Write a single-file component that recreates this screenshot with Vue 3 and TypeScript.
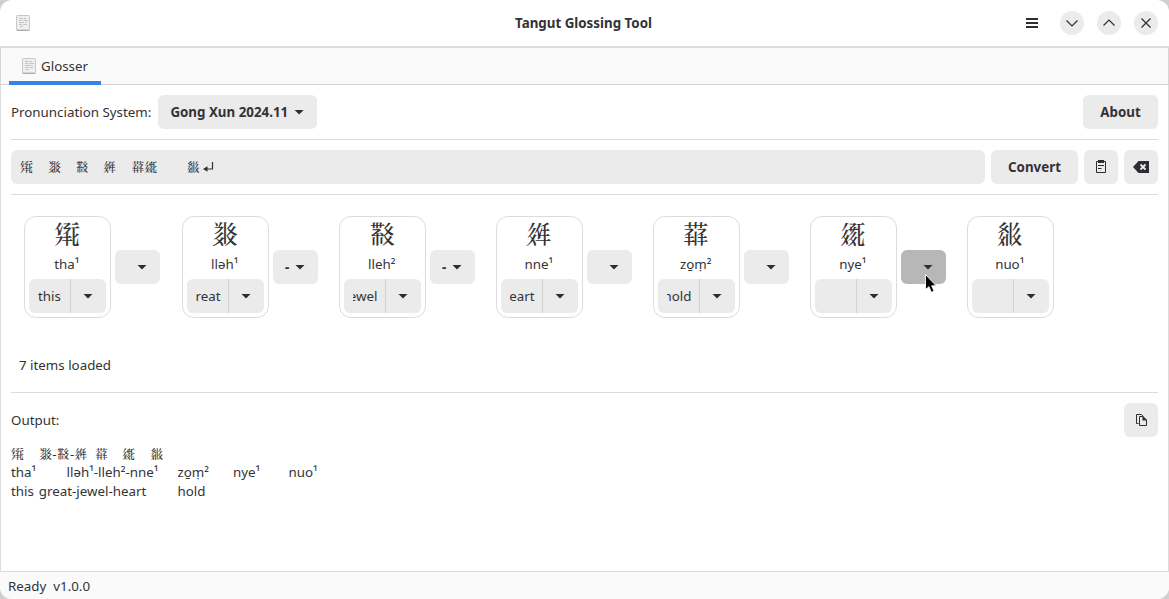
<script setup lang="ts">
interface Cell {
  glyph: string
  sound: string
  gloss: string
  joiner: string | null
  hovered?: boolean
}

const cells: Cell[] = [
  { glyph: '𗋕', sound: 'tha¹', gloss: 'this', joiner: '' },
  { glyph: '𘏨', sound: 'lləh¹', gloss: 'great', joiner: '-' },
  { glyph: '𘜶', sound: 'lleh²', gloss: 'jewel', joiner: '-' },
  { glyph: '𗤶', sound: 'nne¹', gloss: 'heart', joiner: '' },
  { glyph: '\u{17708}', sound: 'zo̱ṃ²', gloss: 'hold', joiner: '' },
  { glyph: '\u{17a7a}', sound: 'nye¹', gloss: '', joiner: '', hovered: true },
  { glyph: '\u{1853c}', sound: 'nuo¹', gloss: '', joiner: null },
]

interface Segment {
  text: string
  width: number
}

const g = cells.map((c) => c.glyph)

const inputSegments: Segment[] = [
  { text: g[0], width: 28 },
  { text: g[1], width: 27.5 },
  { text: g[2], width: 27.5 },
  { text: g[3], width: 28 },
  { text: g[4] + g[5], width: 55.5 },
  { text: g[6], width: 16.5 },
]

const outputRows: { kind: string; segments: Segment[] }[] = [
  {
    kind: 'script',
    segments: [
      { text: g[0], width: 28 },
      { text: `${g[1]}-${g[2]}-${g[3]}`, width: 55.5 },
      { text: g[4], width: 27.5 },
      { text: g[5], width: 28 },
      { text: g[6], width: 28 },
    ],
  },
  {
    kind: 'sounds',
    segments: [
      { text: 'tha¹', width: 55.5 },
      { text: 'lləh¹-lleh²-nne¹', width: 111 },
      { text: 'zo̱ṃ²', width: 55.5 },
      { text: 'nye¹', width: 55.5 },
      { text: 'nuo¹', width: 55.5 },
    ],
  },
  {
    kind: 'glosses',
    segments: [
      { text: 'this', width: 27.75 },
      { text: 'great-jewel-heart', width: 138.75 },
      { text: 'hold', width: 55.5 },
    ],
  },
]
</script>

<template>
  <div class="desktop">
    <div class="window">
      <header class="titlebar">
        <svg class="app-icon" width="16" height="18" viewBox="0 0 16 18">
          <rect x="1.5" y="1.5" width="13" height="14.5" rx="0.8" fill="#efefef" stroke="#c8c8c8" />
          <path d="M1.5 16.4h13" stroke="#a6a6a6" />
          <path d="M4 4.500h4M9 4.500h2M4 6.500h3M8 6.500h5M4 8.500h5M10 8.500h1.500M4 10.500h3M8 10.500h4M5 12.500h3" stroke="#c4c4c4" />
        </svg>
        <h1>Tangut Glossing Tool</h1>
        <div class="controls">
          <svg class="burger" width="12" height="10" viewBox="0 0 12 10"><path d="M0 1h12M0 5h12M0 9h12" stroke="#2e2e32" stroke-width="2" /></svg>
          <span class="round"><svg width="24" height="24" viewBox="0 0 24 24"><path d="M6.500 9.500L12 15l5.500-5.500" /></svg></span>
          <span class="round"><svg width="24" height="24" viewBox="0 0 24 24"><path d="M6.500 14.500L12 9l5.500 5.500" /></svg></span>
          <span class="round"><svg width="24" height="24" viewBox="0 0 24 24"><path d="M7.500 7.500l9 9M16.500 7.500l-9 9" /></svg></span>
        </div>
      </header>

      <nav class="tabs">
        <div class="tab">
          <svg width="16" height="18" viewBox="0 0 16 18">
            <rect x="1.500" y="1.500" width="13" height="14.500" rx="0.8" fill="#efefef" stroke="#c8c8c8" />
            <path d="M1.500 16.400h13" stroke="#a6a6a6" />
            <path d="M4 4.500h4M9 4.500h2M4 6.500h3M8 6.500h5M4 8.500h5M10 8.500h1.500M4 10.500h3M8 10.500h4M5 12.500h3" stroke="#c4c4c4" />
          </svg>
          <span>Glosser</span>
        </div>
      </nav>

      <main class="content">
        <section class="row system">
          <label>Pronunciation System:</label>
          <button class="btn select">Gong Xun 2024.11 <i class="caret"></i></button>
          <button class="btn about">About</button>
        </section>

        <section class="row convert">
          <div class="entry">
            <span v-for="(s, i) in inputSegments" :key="i" class="tangut" :style="{ width: s.width + 'px' }">{{ s.text }}</span>
            <svg width="11" height="10" viewBox="0 0 11 10"><path d="M9.500 0v7H3" fill="none" stroke="#2e2e32" stroke-width="1.200" /><path d="M0 7l4.500-2.700v5.400z" fill="#2e2e32" /></svg>
          </div>
          <button class="btn do-convert">Convert</button>
          <button class="btn square">
            <svg width="16" height="16" viewBox="0 0 16 16"><path d="M3.500 2.500h9v11h-9z" fill="none" stroke="#2e2e32" /><path d="M5 1h6v3H5z" fill="#2e2e32" /><path d="M5 6.500h6M5 9.500h3.500" stroke="#2e2e32" /></svg>
          </button>
          <button class="btn square">
            <svg width="16" height="16" viewBox="0 0 16 16"><path d="M5.500 2H16v12H5.500L0 8z" fill="#2e2e32" /><path d="M7.500 5.500l5 5M12.500 5.500l-5 5" stroke="#ebebeb" stroke-width="1.800" /></svg>
          </button>
        </section>

        <section class="cells">
          <template v-for="(c, i) in cells" :key="i">
            <article class="card">
              <div class="glyph">{{ c.glyph }}</div>
              <div class="sound">{{ c.sound }}</div>
              <div class="combo">
                <div class="field"><span class="clip">{{ c.gloss }}</span></div>
                <div class="drop"><i class="caret"></i></div>
              </div>
            </article>
            <button v-if="c.joiner !== null" class="joiner" :class="{ hovered: c.hovered, first: i === 0 }">
              <span class="dash">{{ c.joiner }}</span><i class="caret"></i>
              <svg v-if="c.hovered" class="pointer" width="14" height="22" viewBox="0 0 14 22">
                <path d="M1.500 1.500v15l3.500-2.800 2.300 5.600 2.800-1.100-2.400-5.400h4.500z" fill="#000" stroke="#fff" stroke-width="0.900" />
              </svg>
            </button>
          </template>
        </section>

        <p class="loaded">7 items loaded</p>

        <section class="output">
          <div class="out-head">
            <span>Output:</span>
            <button class="btn square">
              <svg width="16" height="16" viewBox="0 0 16 16"><path d="M5.500 11.500H3.500v-9h5l2 2" fill="none" stroke="#2e2e32" /><path d="M6.500 4.500H10l3.500 3.500v5.500h-7z" fill="#ebebeb" stroke="#2e2e32" /><path d="M9.500 4l4.500 4.500H9.500z" fill="#2e2e32" /></svg>
            </button>
          </div>
          <div v-for="r in outputRows" :key="r.kind" class="out-row" :class="r.kind">
            <span v-for="(s, i) in r.segments" :key="i" :style="{ width: s.width + 'px' }">{{ s.text }}</span>
          </div>
        </section>
      </main>

      <footer class="status"><span>Ready</span><span>v1.0.0</span></footer>
    </div>
  </div>
</template>

<style>
body { margin: 0; overflow: hidden; }
</style>

<style scoped>
* { box-sizing: border-box; }
.desktop { width: 1169px; height: 599px; background: #cfcfcf; }
.window {
  width: 1169px; height: 599px; border-radius: 12px; overflow: hidden; background: #fff;
  display: flex; flex-direction: column; color: #333336;
  font-family: "Noto Sans", "Noto Serif Tangut", "Noto Sans CJK SC", sans-serif;
  font-size: 13.33px; line-height: 18px;
}
button { font: inherit; color: inherit; border: 0; padding: 0; margin: 0; }
.titlebar { height: 48px; border-bottom: 2px solid #dcdcdc; display: grid; grid-template-columns: 200px 1fr 200px; align-items: center; padding: 0 11px 0 15px; flex: none; }
.app-icon { display: block; }
h1 { margin: 0 6px 0 0; font-size: 13.33px; font-weight: 700; text-align: center; line-height: 18px; }
.controls { display: flex; align-items: center; justify-content: flex-end; gap: 13px; }
.burger { margin-right: 9px; }
.round { width: 24px; height: 24px; border-radius: 50%; background: #ebebeb; }
.round svg { display: block; fill: none; stroke: #2e2e32; stroke-width: 1.2; }
.tabs { height: 37px; flex: none; background: #fafafa; border: 1px solid #d5d5d5; border-top: 0; padding-left: 8px; display: flex; }
.tab { width: 92px; height: 37px; border-bottom: 4px solid #3584e4; display: flex; align-items: center; padding-left: 12px; gap: 4px; }
.tab span { padding-top: 2px; }
.tab svg { margin-top: 2px; }
.content { flex: 1; border: 1px solid #dcdcdc; border-width: 0 1px; padding: 10px 10px 0; display: flex; flex-direction: column; min-height: 0; }
.row { display: flex; align-items: center; padding-bottom: 10px; border-bottom: 1px solid #dcdcdc; flex: none; height: 45px; }
.convert { height: 55px; padding-top: 10px; gap: 6px; }
.btn { height: 34px; border-radius: 6px; background: #ebebeb; font-weight: 700; display: flex; align-items: center; justify-content: center; flex: none; }
.caret { display: block; width: 10px; height: 5px; background: #2e2e32; clip-path: polygon(0 0, 100% 0, 50% 100%); flex: none; }
.select { width: 159px; margin-left: 7px; gap: 6px; padding-right: 1px; }
.about { width: 75px; margin-left: auto; }
.square { width: 34px; }
.do-convert { width: 87px; }
.entry { flex: 1; height: 34px; background: #ebebeb; border-radius: 6px; display: flex; align-items: center; padding-left: 9px; white-space: pre; }
.tangut { flex: none; }
.cells { display: flex; align-items: center; height: 102px; margin: 21px 0 0 13px; flex: none; }
.card { width: 87px; height: 102px; border: 1px solid #dcdcdc; border-radius: 12px; flex: none; padding: 0 4px 4px; display: flex; flex-direction: column; align-items: center; }
.glyph { font-size: 26.67px; line-height: 34px; height: 38px; padding-right: 1px; }
.sound { line-height: 18px; height: 24px; padding-right: 1.5px; }
.combo { width: 77px; height: 34px; border-radius: 6px; background: #ebebeb; display: flex; }
.field { width: 42px; border-right: 1px solid #d2d2d2; display: flex; align-items: center; padding: 0 7px 0 9px; }
.clip { max-width: 24.5px; overflow: hidden; display: flex; justify-content: flex-end; }
.drop { flex: 1; display: flex; align-items: center; justify-content: center; padding-right: 1px; }
.joiner { width: 45px; height: 34px; border-radius: 6px; background: #ebebeb; margin: 0 21px 0 4px; font-weight: 700; display: flex; align-items: center; padding: 0 13px 0 12px; justify-content: space-between; flex: none; position: relative; }
.joiner.first { margin-right: 22px; }
.joiner.hovered { background: #b7b7b7; }
.pointer { position: absolute; left: 23px; top: 23px; }
.loaded { margin: 38px 0 0 8px; line-height: 18px; height: 36px; }
.output { border-top: 1px solid #dcdcdc; padding-top: 10px; }
.out-head { display: flex; justify-content: space-between; align-items: center; margin-bottom: 7px; }
.out-row { display: flex; height: 19px; line-height: 19px; white-space: pre; }
.out-row.script { line-height: 21px; }
.out-row span { flex: none; }
.status { height: 28px; flex: none; background: #fafafa; border-top: 1px solid #dcdcdc; display: flex; align-items: center; gap: 7px; padding: 1px 0 0 8px; }
</style>
